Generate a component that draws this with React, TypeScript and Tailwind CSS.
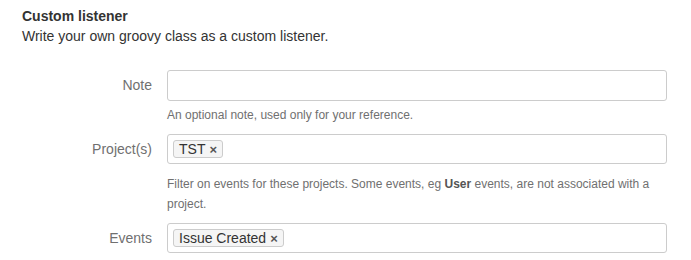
const Tag = ({ label }: { label: string }) => (
  <span className="inline-flex items-center h-[18px] px-[5px] gap-[4px] border border-[#ccc] rounded-[3px] bg-[#f5f5f5] text-[14px] leading-[16px] text-[#333]">
    {label}
    <span className="text-[13px] font-bold text-[#555] leading-none">×</span>
  </span>
);

const Row = ({
  label,
  children,
  boxClass,
}: {
  label: string;
  children?: React.ReactNode;
  boxClass: string;
}) => (
  <div className="flex items-center">
    <label className="w-[130px] text-right text-[14px] text-[#707070]">{label}</label>
    <div
      className={`ml-[15px] w-[500px] flex items-center pl-[5px] border border-[#ccc] rounded-[3px] bg-white ${boxClass}`}
    >
      {children}
    </div>
  </div>
);

export default function App() {
  return (
    <div
      className="w-[691px] h-[260px] bg-white pl-[22px] pt-[6px] overflow-hidden text-[#333]"
      style={{ fontFamily: '"Liberation Sans", Arial, sans-serif' }}
    >
      <h3 className="text-[14px] leading-[20px] font-bold">Custom listener</h3>
      <p className="text-[14px] leading-[20px]">Write your own groovy class as a custom listener.</p>

      <div className="mt-[24px]">
        {/* Note */}
        <Row label="Note" boxClass="h-[31px]" />
        <p className="ml-[145px] mt-[4px] w-[500px] text-[12px] leading-[20px] text-[#707070]">
          An optional note, used only for your reference.
        </p>

        {/* Projects */}
        <div className="mt-[9px]">
          <Row label="Project(s)" boxClass="h-[30px]">
            <Tag label="TST" />
          </Row>
        </div>
        <p className="ml-[145px] mt-[10px] w-[500px] text-[12px] leading-[20px] text-[#707070]">
          Filter on events for these projects. Some events, eg <b className="text-[#555]">User</b> events, are
          not associated with a project.
        </p>

        {/* Events */}
        <div className="mt-[9px]">
          <Row label="Events" boxClass="h-[30px]">
            <Tag label="Issue Created" />
          </Row>
        </div>
      </div>
    </div>
  );
}
